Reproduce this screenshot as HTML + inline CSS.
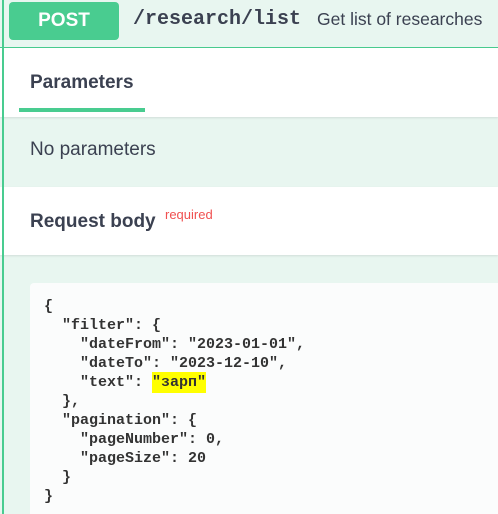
<!DOCTYPE html>
<html><head><meta charset="utf-8"><style>
*{margin:0;padding:0;box-sizing:border-box}
html,body{width:498px;height:514px;overflow:hidden}
body{background:#e8f6f0;font-family:"Liberation Sans",Arial,sans-serif;color:#3b4151;position:relative}
.lb{position:absolute;left:2px;top:0;width:1.5px;height:514px;background:#49cc90;z-index:5}
.hdr{position:absolute;left:0;top:0;width:498px;height:48px;background:#e8f6f0;border-bottom:1px solid #49cc90}
.btn{position:absolute;left:9px;top:2px;width:110px;height:38px;background:#49cc90;border-radius:4px;color:#fff;font-weight:bold;font-size:19px;text-align:center;line-height:38px}
.path{position:absolute;left:133px;top:7px;font-family:"Liberation Mono",monospace;font-weight:bold;font-size:20px;line-height:26px;color:#3b4151}
.desc{position:absolute;left:317px;top:9px;font-size:17.5px;line-height:20px;color:#3b4151}
.w1{position:absolute;left:0;top:48px;width:498px;height:69px;background:#fff;box-shadow:0 1px 2px rgba(0,0,0,.1)}
.t1{position:absolute;left:30px;top:72px;font-weight:bold;font-size:19px;line-height:22px}
.ul{position:absolute;left:19px;top:108px;width:126px;height:4px;background:#49cc90}
.np{position:absolute;left:30px;top:139px;font-size:19px;line-height:22px}
.w2{position:absolute;left:0;top:187px;width:498px;height:68px;background:#fff;box-shadow:0 1px 2px rgba(0,0,0,.1)}
.t2{position:absolute;left:30px;top:211px;font-weight:bold;font-size:19px;line-height:22px}
.req{position:absolute;left:165px;top:207px;font-size:13px;line-height:16px;color:#f05050}
.code{position:absolute;left:30px;top:283px;width:480px;height:240px;background:#fbfcfc;border-radius:4px}
pre{position:absolute;left:44px;top:297px;font-family:"Liberation Mono",monospace;font-weight:bold;font-size:15px;line-height:19px;color:#333}
.hl{background:#ffff00;padding:2px 0}
</style></head><body>
<div class="lb"></div>
<div class="hdr"><div class="btn">POST</div><div class="path">/research/list</div><div class="desc">Get list of researches</div></div>
<div class="w1"></div><div class="t1">Parameters</div><div class="ul"></div>
<div class="np">No parameters</div>
<div class="w2"></div><div class="t2">Request body</div><div class="req">required</div>
<div class="code"></div>
<pre>{
  "filter": {
    "dateFrom": "2023-01-01",
    "dateTo": "2023-12-10",
    "text": <span class="hl">"зарп"</span>
  },
  "pagination": {
    "pageNumber": 0,
    "pageSize": 20
  }
}</pre>
</body></html>
